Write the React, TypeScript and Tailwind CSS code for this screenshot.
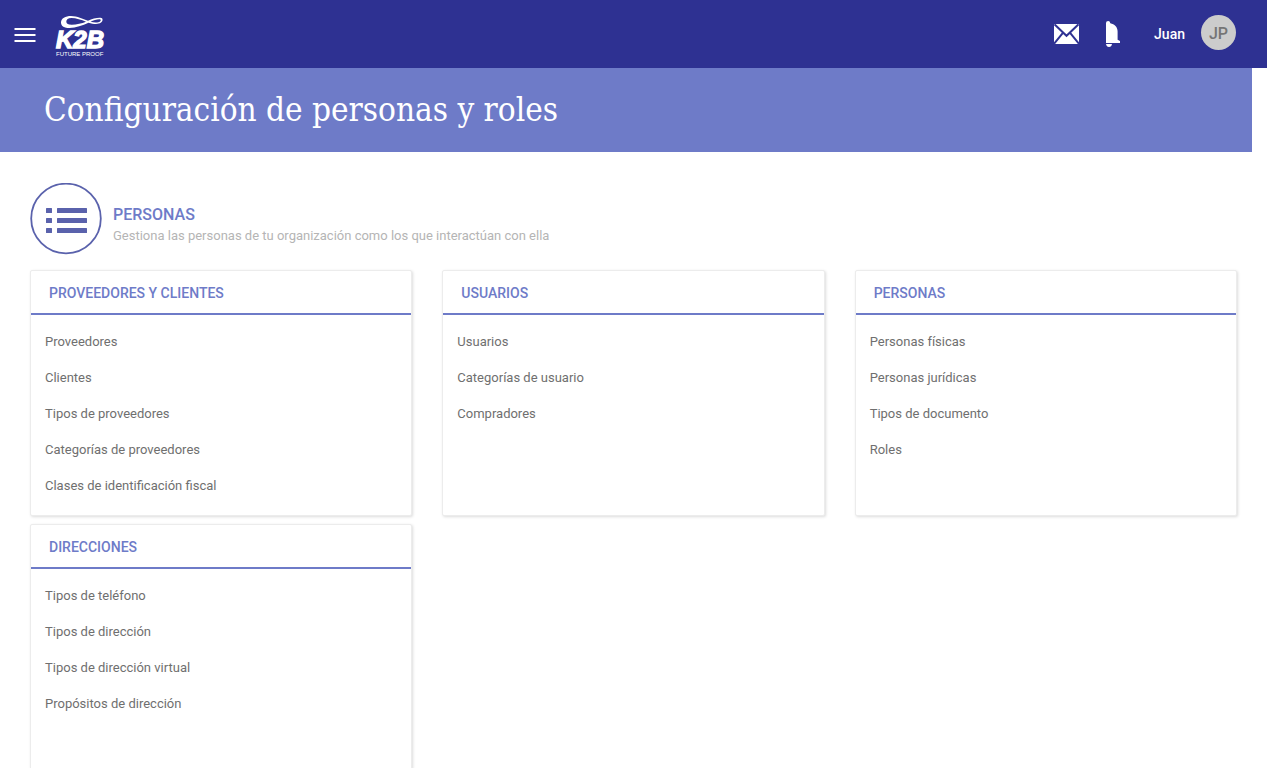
type Group = { title: string; items: string[] };

const groups: Group[] = [
  {
    title: 'PROVEEDORES Y CLIENTES',
    items: [
      'Proveedores',
      'Clientes',
      'Tipos de proveedores',
      'Categorías de proveedores',
      'Clases de identificación fiscal',
    ],
  },
  { title: 'USUARIOS', items: ['Usuarios', 'Categorías de usuario', 'Compradores'] },
  {
    title: 'PERSONAS',
    items: ['Personas físicas', 'Personas jurídicas', 'Tipos de documento', 'Roles'],
  },
  {
    title: 'DIRECCIONES',
    items: [
      'Tipos de teléfono',
      'Tipos de dirección',
      'Tipos de dirección virtual',
      'Propósitos de dirección',
    ],
  },
];

function Logo() {
  return (
    <svg width="52" height="44" viewBox="0 0 52 44" className="block" role="img" aria-label="K2B Future Proof">
      <path
        fill="#fff"
        fillRule="evenodd"
        d="M6 8.400C6 4.400 10.500 2 16 2C22.500 2 27.500 5 33 6.800C37 4.800 42 3.600 45.500 3.800C48.400 4 48 7 46 8.600C43.500 10.700 38.500 10.300 33.500 8.700C27.500 11.300 21 14 14.500 14C9.500 14 6 12.300 6 8.400ZM11.300 7.800C11.300 10 13.500 10.900 17 10.800C21.500 10.600 27 9.300 31 7.700C26.500 5.900 21 4 16.500 4C13 4 11.300 5.500 11.300 7.800ZM35.500 7.800C39.500 8.900 43.300 8.900 45 7.500C46.100 6.400 46 5.400 44.700 5.200C42.200 5 38.500 6.300 35.500 7.800Z"
      />
      <text
        x="1"
        y="34"
        fill="#fff"
        stroke="#fff"
        strokeWidth="1.4"
        className="font-['Liberation_Sans',sans-serif] text-[24px] font-bold italic"
      >
        K2B
      </text>
      <text x="1" y="42" fill="#fff" className="font-['Liberation_Sans',sans-serif] text-[6px]">
        FUTURE PROOF
      </text>
    </svg>
  );
}

function Header() {
  return (
    <header className="flex h-[68px] items-center bg-[#2e3192] pl-[14px] pr-[31px] text-white">
      <button type="button" aria-label="Menú" className="mt-[2px] block">
        <svg width="22" height="16" viewBox="0 0 22 16" fill="#fff" className="block">
          <path d="M0.500 1h21v2H0.500zM0.500 7h21v2H0.500zM0.500 13h21v2H0.500z" />
        </svg>
      </button>
      <a href="#" className="ml-[19px] mt-1">
        <Logo />
      </a>
      <div className="ml-auto flex items-center">
        <button type="button" aria-label="Mensajes">
          <svg width="25" height="20" viewBox="0 0 25 20" className="block">
            <rect width="25" height="20" fill="#fff" />
            <path
              d="M0.500 0.300L12.500 11.800L24.500 0.300M0 19.800L8.700 9.200M25 19.800L16.300 9.200"
              fill="none"
              stroke="#2e3192"
              strokeWidth="2"
            />
          </svg>
        </button>
        <button type="button" aria-label="Notificaciones" className="ml-[26px]">
          <svg width="16" height="26" viewBox="0 0 16 26" fill="#fff" className="block">
            <path d="M1 3V2Q1 0 3.200 0Q5 0 5.300 2.300C9.500 3.200 12.600 6 12.600 10.500V18.700L15 20V22H1Z" />
            <path d="M1 23H7Q6.500 25.900 4 26Q1.500 25.900 1 23Z" />
          </svg>
        </button>
        <span className="ml-[33px] text-sm font-medium">Juan</span>
        <button
          type="button"
          aria-label="Cuenta de Juan"
          className="mb-[3px] ml-4 flex size-[35px] items-center justify-center rounded-full bg-[#cccccc] pt-[2px] text-base font-medium text-[#757575]"
        >
          JP
        </button>
      </div>
    </header>
  );
}

function Card({ title, items }: Group) {
  return (
    <section className="min-h-[246px] rounded-xs border border-[#ececec] bg-white shadow-[1px_1px_3px_rgba(0,0,0,0.14)]">
      <h3 className="flex h-11 items-center border-b-2 border-[#6e7bc8] pl-[18px] pt-[2px] text-sm font-medium text-[#6e7bc8]">
        {title}
      </h3>
      <ul className="px-[14px] pb-[10px] pt-[9px]">
        {items.map((item) => (
          <li key={item} className="flex h-9 items-center">
            <a href="#" className="text-[13px] text-[#6f6f6f] hover:underline">
              {item}
            </a>
          </li>
        ))}
      </ul>
    </section>
  );
}

export default function App() {
  return (
    <div className="h-screen overflow-y-auto bg-white pr-[17px] font-['Roboto',sans-serif] [scrollbar-width:none]">
      <Header />
      <div className="mr-[15px] flex h-[84px] items-center bg-[#6e7bc8] pl-11">
        <h1 className="font-['Roboto_Slab','DejaVu_Serif_Condensed','DejaVu_Serif',serif] text-[33px] text-white">
          Configuración de personas y roles
        </h1>
      </div>
      <main className="px-[30px] pb-8 pt-[31px]">
        <div className="flex items-center">
          <svg width="72" height="72" viewBox="0 0 72 72" className="block" aria-hidden="true">
            <circle cx="36" cy="35.500" r="34.800" fill="none" stroke="#5a62ac" strokeWidth="1.800" />
            <g fill="#5a62ac">
              <rect x="16" y="25" width="6" height="5" rx="0.500" />
              <rect x="27" y="25" width="30" height="5" rx="0.500" />
              <rect x="16" y="35" width="6" height="5" rx="0.500" />
              <rect x="27" y="35" width="30" height="5" rx="0.500" />
              <rect x="16" y="45" width="6" height="5" rx="0.500" />
              <rect x="27" y="45" width="30" height="5" rx="0.500" />
            </g>
          </svg>
          <div className="ml-[11px] pt-3">
            <h2 className="text-base leading-[21px] font-medium text-[#6e7bc8]">PERSONAS</h2>
            <p className="text-[13px] leading-[21px] text-[#b5b5b5]">
              Gestiona las personas de tu organización como los que interactúan con ella
            </p>
          </div>
        </div>
        <div className="mt-[15px] grid grid-cols-3 gap-x-[30px] gap-y-2">
          {groups.map((group) => (
            <Card key={group.title} {...group} />
          ))}
        </div>
      </main>
    </div>
  );
}
